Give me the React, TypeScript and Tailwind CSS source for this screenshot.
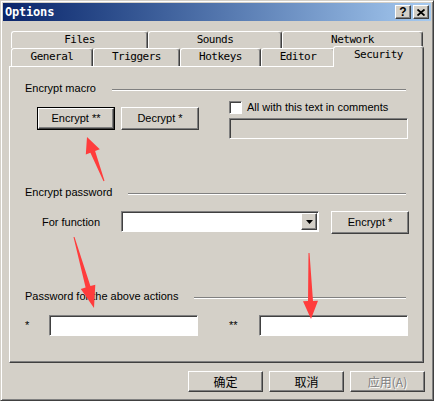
import React from 'react';

type Pt = [number, number];

const arrowPoints = (t: Pt, p: Pt, len: number, headW: number, w1: number, w2: number) => {
  const dx = p[0] - t[0];
  const dy = p[1] - t[1];
  const m = Math.hypot(dx, dy);
  const ux = dx / m, uy = dy / m;
  const nx = -uy, ny = ux;
  const bx = p[0] - ux * len, by = p[1] - uy * len;
  const pts: Pt[] = [
    [t[0] + nx * w1 / 2, t[1] + ny * w1 / 2],
    [bx + nx * w2 / 2, by + ny * w2 / 2],
    [bx + nx * headW / 2, by + ny * headW / 2],
    p,
    [bx - nx * headW / 2, by - ny * headW / 2],
    [bx - nx * w2 / 2, by - ny * w2 / 2],
    [t[0] - nx * w1 / 2, t[1] - ny * w1 / 2],
  ];
  return pts.map(q => q.map(v => v.toFixed(1)).join(',')).join(' ');
};

const raised = 'border border-t-white border-l-white border-r-[#404040] border-b-[#404040] shadow-[inset_-1px_-1px_#808080] bg-[#d4d0c8]';
const sunken = 'border border-t-[#808080] border-l-[#808080] border-r-white border-b-white shadow-[inset_1px_1px_#404040]';

const Btn: React.FC<{ label: string; def?: boolean; className?: string }> = ({ label, def, className }) => (
  <div className={`shrink-0 ${def ? 'border border-black' : ''} ${className ?? ''}`}>
    <div className={`${raised} h-full w-full flex items-center justify-center text-[11px] text-black`}>{label}</div>
  </div>
);

const Tab: React.FC<{ label: string; className: string }> = ({ label, className }) => (
  <div className={`shrink-0 border-t border-l border-t-white border-l-white border-r border-r-[#404040] shadow-[inset_-1px_0_#808080] rounded-t-[3px] bg-[#d4d0c8] flex items-center justify-center font-['DejaVu_Sans_Mono',monospace] text-[11px] tracking-[-0.5px] text-black ${className}`}>
    {label}
  </div>
);

const GroupHead: React.FC<{ label: string; className?: string }> = ({ label, className }) => (
  <div className={`flex items-center h-[13px] ${className ?? ''}`}>
    <span className="text-[11px] leading-[13px] text-black whitespace-nowrap">{label}</span>
    <div className="flex-1 h-[2px] border-t border-t-[#808080] border-b border-b-white mt-[2px] ml-[16px]" />
  </div>
);

export default function App() {
  return (
    <div className="relative w-[434px] h-[401px] bg-[#d4d0c8] border border-t-[#d4d0c8] border-l-[#d4d0c8] border-r-[#404040] border-b-[#404040] shadow-[inset_1px_1px_#fff,inset_-1px_-1px_#808080] p-[2px] font-['Liberation_Sans',Arial,sans-serif] overflow-hidden">
      {/* title bar */}
      <div className="h-[18px] bg-gradient-to-r from-[#0a246a] to-[#a6caf0] flex items-center pl-[2px] pr-[2px]">
        <span className="text-white font-bold font-['DejaVu_Sans_Mono',monospace] text-[12px] tracking-[-0.2px] flex-1">Options</span>
        <div className={`${raised} w-[16px] h-[14px] flex items-center justify-center text-[12px] font-bold leading-none text-black`}>?</div>
        <div className={`${raised} w-[16px] h-[14px] ml-[2px] flex items-center justify-center`}>
          <svg width="8" height="7" viewBox="0 0 8 7">
            <path d="M0.5 0.5 L7.5 6.5 M7.5 0.5 L0.5 6.5" stroke="#000" strokeWidth="1.8" />
          </svg>
        </div>
      </div>

      {/* tabs */}
      <div className="mt-[10px] ml-[8px] flex h-[17px]">
        <Tab label="Files" className="w-[137px] h-[17px]" />
        <Tab label="Sounds" className="w-[134px] h-[17px]" />
        <Tab label="Network" className="w-[141px] h-[17px]" />
      </div>
      <div className="ml-[8px] flex items-end h-[18px]">
        <Tab label="General" className="w-[82px] h-[18px]" />
        <Tab label="Triggers" className="w-[87px] h-[18px]" />
        <Tab label="Hotkeys" className="w-[81px] h-[18px]" />
        <Tab label="Editor" className="w-[74px] h-[18px]" />
        <Tab label="Security" className="relative z-10 w-[91px] h-[21px] -ml-[2px] -mb-[1px] pb-[4px]" />
      </div>

      {/* panel */}
      <div className="ml-[6px] w-[415px] h-[297px] border border-t-white border-l-white border-r-[#404040] border-b-[#404040] shadow-[inset_-1px_-1px_#808080] pl-[15px] pr-[17px] pt-[15px] text-black">
        <GroupHead label="Encrypt macro" />

        <div className="flex items-start mt-[6px]">
          <div className="flex gap-[6px] ml-[12px] mt-[6px] shrink-0">
            <Btn label="Encrypt **" def className="w-[78px] h-[23px]" />
            <Btn label="Decrypt *" className="w-[78px] h-[23px]" />
          </div>
          <div className="ml-[30px] flex flex-col shrink-0">
            <div className="flex items-center h-[13px]">
              <div className={`${sunken} w-[13px] h-[13px] bg-white`} />
              <span className="ml-[5px] text-[11px] leading-[13px]">All with this text in comments</span>
            </div>
            <div className={`${sunken} mt-[4px] w-[179px] h-[21px] bg-[#d4d0c8]`} />
          </div>
        </div>

        <GroupHead label="Encrypt password" className="mt-[47px]" />

        <div className="flex items-start mt-[12px] h-[23px]">
          <div className="w-[96px] shrink-0 pl-[17px] self-center text-[11px]">For function</div>
          <div className={`${sunken} shrink-0 w-[198px] h-[21px] bg-white flex justify-end items-start pt-[1px] pr-[1px]`}>
            <div className={`${raised} w-[16px] h-[17px] flex items-center justify-center`}>
              <svg width="7" height="4" viewBox="0 0 7 4">
                <path d="M0 0 H7 L3.5 4 Z" fill="#000" />
              </svg>
            </div>
          </div>
          <Btn label="Encrypt *" className="ml-[12px] w-[78px] h-[23px]" />
        </div>

        <GroupHead label="Password for the above actions" className="mt-[56px]" />

        <div className="flex items-center mt-[12px]">
          <span className="w-[24px] shrink-0 text-[11px]">*</span>
          <div className={`${sunken} shrink-0 w-[149px] h-[21px] bg-white`} />
          <span className="ml-[31px] w-[30px] shrink-0 text-[11px]">**</span>
          <div className={`${sunken} shrink-0 w-[149px] h-[21px] bg-white`} />
        </div>
      </div>

      {/* dialog buttons */}
      <div className="flex justify-end gap-[6px] mt-[8px] pr-[6px] font-['Noto_Sans_CJK_SC','Liberation_Sans',sans-serif]">
        <div className={`${raised} w-[75px] h-[21px] flex items-center justify-center text-[12px] text-black`}>确定</div>
        <div className={`${raised} w-[75px] h-[21px] flex items-center justify-center text-[12px] text-black`}>取消</div>
        <div className={`${raised} w-[75px] h-[21px] flex items-center justify-center text-[12px] text-[#808080] [text-shadow:1px_1px_#fff]`}>应用(A)</div>
      </div>

      {/* annotation arrows */}
      <svg className="absolute left-0 top-0 pointer-events-none" width="434" height="401" viewBox="0 0 434 401">
        <polygon points={arrowPoints([103, 180], [86, 136], 16, 15, 1, 5)} fill="#ff3c3c" />
        <polygon points={arrowPoints([73, 236], [93, 307], 22, 15, 1, 5)} fill="#ff3c3c" />
        <polygon points={arrowPoints([308, 252], [310, 318], 18, 15, 1, 5)} fill="#ff3c3c" />
      </svg>
    </div>
  );
}
